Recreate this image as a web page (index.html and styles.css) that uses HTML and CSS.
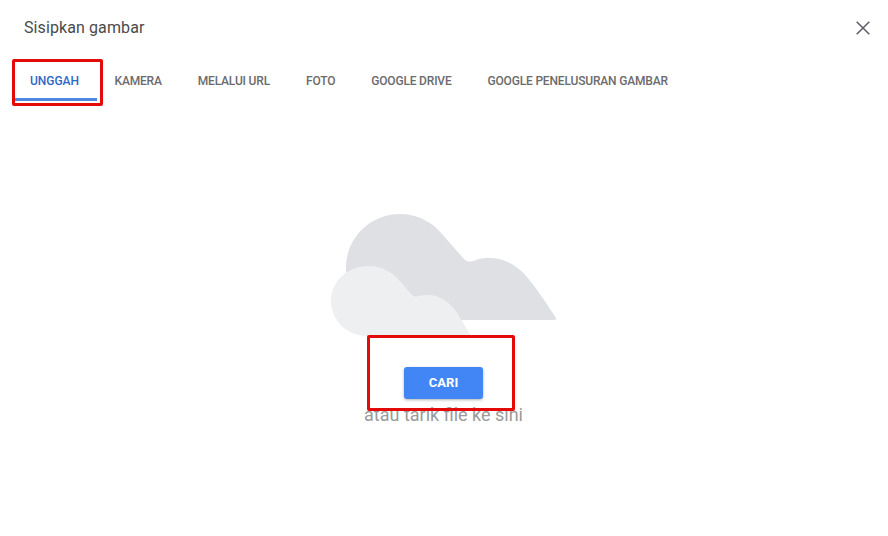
FILE: index.html
```html
<!DOCTYPE html>
<html lang="id">
<head>
<meta charset="utf-8">
<title>Sisipkan gambar</title>
<link rel="stylesheet" href="styles.css">
</head>
<body>
<div class="dialog">
  <header class="head">
    <h1 class="title">Sisipkan gambar</h1>
    <svg class="close" viewBox="0 0 14 14" width="14" height="14" aria-label="Tutup"><path d="M.7.7l12.6 12.6M13.3.7L.7 13.3"/></svg>
  </header>
  <nav class="tabs">
    <span class="tab active">UNGGAH</span>
    <span class="tab">KAMERA</span>
    <span class="tab">MELALUI URL</span>
    <span class="tab">FOTO</span>
    <span class="tab">GOOGLE DRIVE</span>
    <span class="tab">GOOGLE PENELUSURAN GAMBAR</span>
  </nav>
  <main class="panel">
    <svg class="cloud" viewBox="320 210 240 130" width="240" height="130" aria-hidden="true">
      <path class="back" d="M346 320V268C346 238 370 214 400 214C418 214 432 222 442 234L464 259C467 262 470 262 474 261C480 258 484 258 489 258C505 258 518 266 527 277C537 289 547 304 556 318C557 319 556 320 554 320Z"/>
      <path class="front" d="M367 336C347 336 331 320 331 301C331 282 347 266 368 266C382 266 392 272 400 281L411 294C413 297 416 297 419 296C422 295 425 295 428 295C440 295 449 302 456 311L471 336Z"/>
    </svg>
    <button class="browse" type="button">CARI</button>
    <p class="hint">atau tarik file ke sini</p>
  </main>
  <div class="mark mark-tab"></div>
  <div class="mark mark-btn"></div>
</div>
</body>
</html>
```

FILE: styles.css
```css
* { box-sizing: border-box; }
html, body { margin: 0; height: 100%; background: #fff; overflow: hidden; }
body { font-family: Roboto, "Liberation Sans", sans-serif; }
.dialog { position: relative; width: 888px; height: 536px; }
.head { display: flex; justify-content: space-between; align-items: center; height: 55px; padding: 0 18px 0 24px; }
.title { margin: 0; font-size: 16px; font-weight: 400; letter-spacing: .1px; color: #4a4a4a; }
.close { display: block; }
.close path { fill: none; stroke: #5f6368; stroke-width: 1.6; }
.tabs { display: flex; height: 46px; padding-left: 15px; }
.tab { display: block; height: 46px; padding: 0 18px; font-size: 12px; font-weight: 500; letter-spacing: -.18px; line-height: 52px; color: #6b6b6b; white-space: nowrap; }
.tab.active { width: 81.5px; padding: 0 15px; color: #2f66c9; letter-spacing: -.05px; border-bottom: 3px solid #4f86de; }
.panel { display: flex; flex-direction: column; align-items: center; padding: 109px 1px 0 0; }
.cloud { display: block; margin-right: 7px; }
.cloud .back { fill: #dfe0e4; }
.cloud .front { fill: #eeeff1; }
.browse { display: block; width: 79px; height: 32px; margin-top: 27px; padding: 0 0 2px; border: 0; border-radius: 3px; background: #4285f4; color: #fff; font: 700 13px Roboto, sans-serif; box-shadow: 0 1px 3px rgba(60, 64, 67, .4); }
.hint { margin: 6px 0 0; font-size: 18px; line-height: 20px; color: #9a9a9a; }
.mark { position: absolute; border: 3px solid #e40a0a; border-radius: 2px; }
.mark-tab { left: 12px; top: 59px; width: 91px; height: 47px; }
.mark-btn { left: 367px; top: 335px; width: 148px; height: 76px; }
```
